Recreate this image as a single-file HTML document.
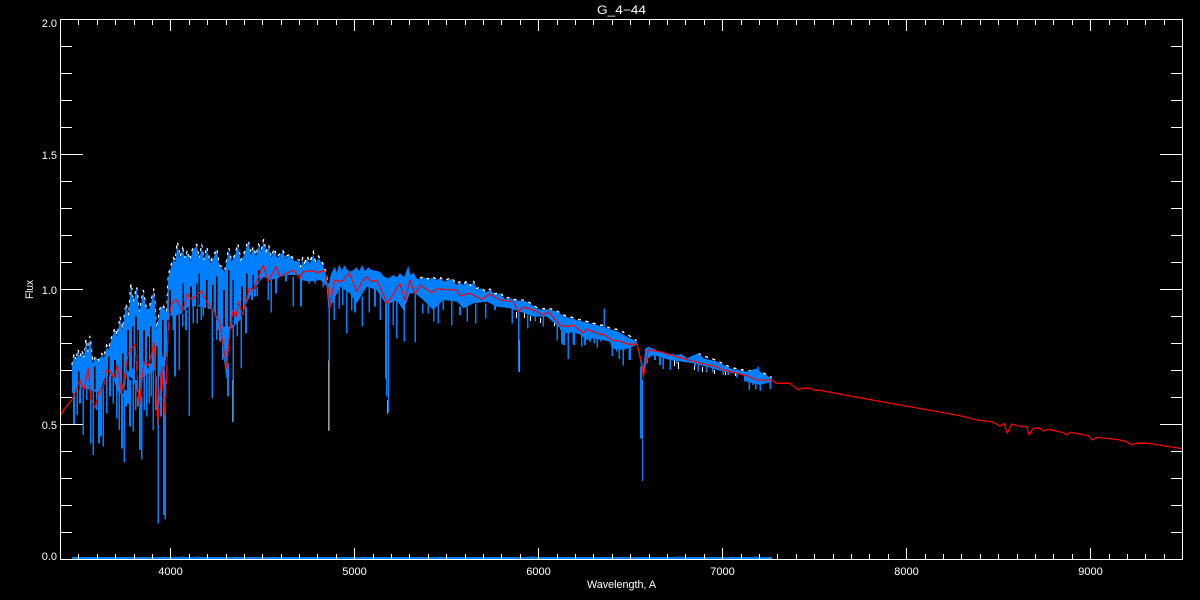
<!DOCTYPE html>
<html><head><meta charset="utf-8"><title>G_4-44</title>
<style>
html,body{margin:0;padding:0;background:#000;width:1200px;height:600px;overflow:hidden}
svg{display:block}
text{font-family:"Liberation Sans",sans-serif;fill:#fff;font-size:11px}
</style></head><body>
<svg width="1200" height="600" viewBox="0 0 1200 600" xmlns="http://www.w3.org/2000/svg">
<rect width="1200" height="600" fill="#000"/>

<!-- white tips of the upper envelope, under the blue -->
<g fill="none" stroke="#fff" stroke-width="4" stroke-dasharray="9 14" shape-rendering="crispEdges">
<path transform="translate(0,228.5) scale(.33333)" d="M216 410L222 375L228 395L234 362L240 385L246 365L252 390L258 332L264 370L270 322L278 400L288 383L296 395L305 375L312 385L320 350L326 360L335 326L345 298L352 320L360 265L368 300L378 225L386 260L393 165L400 220L410 175L418 250L430 185L438 235L448 238L462 180L470 300L480 240L488 228L500 250L505 140L512 115L520 88L526 95L532 40L540 85L548 60L556 90L562 65L570 95L578 60L590 48L598 90L605 46L612 95L620 55L630 100L640 85L650 60L658 110L665 115L675 125L686 58L694 95L702 85L714 46L722 95L732 75L745 36L752 75L760 55L768 80L776 48L784 65L791 32L798 70L806 50L814 85L822 60L832 85L848 65L858 85L870 75L880 92L900 95"/>
<path transform="translate(300,228) scale(.33333)" d="M0 120L8 90L14 104L22 85L30 102L40 72L46 100L56 85L65 100L75 122L85 170"/>
<path transform="translate(300,229) scale(.33333)" d="M360 148L372 142L384 150L396 143L408 150L420 145L432 155L444 150L456 147L468 165L480 158L492 165L500 156L512 170L520 155L530 178L545 175L556 188L570 180L585 195L600 190L615 208L630 205L645 212L660 212L680 215L695 225L710 235L725 240L745 238L770 245L785 255L800 262L815 265L830 270L850 275L870 280L900 288"/>
<path transform="translate(560,299) scale(.33333)" d="M120 78L136 80L150 88L175 92L200 105L230 125M415 163L430 172L450 176L470 185L490 195L510 205L535 210L560 215L590 215L610 222L635 235"/>
</g>
<g stroke="#fff" stroke-width="1" fill="none" shape-rendering="crispEdges">
<path d="M674.5 360v6M678.5 362v7M694.5 366v4M702.5 367v5M706.5 368v4M714.5 370v4M725.5 372v3M735.5 373v3M516.5 312v6M524.5 313v5M530.5 316v5M540.5 318v5M554.5 321v5M227.5 350v5M190.5 300v4M155.5 385v3"/>
</g>

<!-- thin grey spikes -->
<g stroke="#9a9a9a" stroke-width="1" fill="none" shape-rendering="crispEdges">
<path d="M328.5 360V431M232.5 380V422M212.5 340V398M387.5 400V414M519.5 340V372"/>
</g>

<!-- blue, region 1 -->
<g transform="translate(0,230) scale(.33333)" shape-rendering="crispEdges">
<path fill="#0080ff" d="M216 410L222 375L228 395L234 362L240 385L246 365L252 390L258 332L264 370L270 322L278 400L288 383L296 395L305 375L312 385L320 350L326 360L335 326L345 298L352 320L360 265L368 300L378 225L386 260L393 165L400 220L410 175L418 250L430 185L438 235L448 238L462 180L470 300L480 240L488 228L500 250L505 140L512 115L520 88L526 95L532 40L540 85L548 60L556 90L562 65L570 95L578 60L590 48L598 90L605 46L612 95L620 55L630 100L640 85L650 60L658 110L665 115L675 125L686 58L694 95L702 85L714 46L722 95L732 75L745 36L752 75L760 55L768 80L776 48L784 65L791 32L798 70L806 50L814 85L822 60L832 85L848 65L858 85L870 75L880 92L900 95L900 135L860 135L830 145L810 150L790 140L760 180L740 220L720 270L700 290L690 300L680 450L660 300L640 240L600 230L565 230L545 250L520 260L505 250L503 350L490 440L475 440L465 420L445 430L430 440L420 510L400 450L380 430L370 500L350 480L340 440L315 440L300 490L270 480L250 470L216 490Z"/>
<g stroke="#0080ff" stroke-width="5" fill="none">
<path d="M222 450V585M232 480V555M240 470V520M250 450V615M260 470V510M272 470V640M280 470V675M290 470V540M297 480V640M303 480V620M310 470V650M320 440V550M330 440V500M340 440V520M350 470V565M358 470V600M366 480V655M373 480V698M378 480V530M384 430V520M390 450V590M400 450V605M407 450V540M413 500V530M420 500V660M425 500V688M433 430V540M440 400V560M448 420V520M454 420V500M460 400V600M468 420V540M475 430V880M483 430V560M492 420V855M496 450V868M525 250V440M538 250V420M548 250V290M558 240V300M568 230V558M580 230V280M592 230V280M604 230V270M637 240V503M650 270V330M668 300V390M684 400V500M700 280V575M712 270V320M724 260V416M738 230V310M814 150V248M880 140V230M828 140V190M858 135V155M772 170V200M805 150V210M756 170V210M765 175V200M610 230V260M655 270V300M660 290V335M520 250V300M505 250V280"/>
</g>
<g stroke="#000" stroke-width="5" fill="none">
<path d="M573 170V238M590 160V235M620 150V240M638 165V242M672 180V290M726 170V260M700 150V285M760 135V180M776 120V155M236 425V480M284 410V478M345 390V440M384 300V425M408 260V450M432 300V395M470 350V440M503 270V345M488 270V380M415 300V500M452 290V400M368 370V490M326 380V440M398 290V415M444 320V415M510 180V250M550 160V245M598 130V225M650 140V260M686 120V290M740 130V210"/>
</g>
</g>

<!-- blue, region 2 -->
<g transform="translate(300,230) scale(.33333)" shape-rendering="crispEdges">
<path fill="#0080ff" d="M0 120L8 90L14 104L22 85L30 102L40 72L46 100L56 85L65 100L75 122L85 170L92 135L98 122L105 110L110 128L118 103L125 122L135 105L140 118L150 125L160 120L170 112L178 125L185 105L195 122L205 112L215 120L225 122L240 125L252 140L265 145L280 135L290 142L300 130L312 142L325 108L332 135L340 128L350 145L360 148L372 142L384 150L396 143L408 150L420 145L432 155L444 150L456 147L468 165L480 158L492 165L500 156L512 170L520 155L530 178L545 175L556 188L570 180L585 195L600 190L615 208L630 205L645 212L660 212L680 215L695 225L710 235L725 240L745 238L770 245L785 255L800 262L815 265L830 270L850 275L870 280L900 288L900 320L860 330L830 305L800 310L770 285L740 260L700 260L660 245L630 235L590 230L560 215L520 220L490 235L470 215L430 210L400 240L370 210L345 190L330 190L310 240L290 210L260 225L230 180L200 170L170 220L150 190L120 170L100 215L85 235L80 170L60 150L30 155L0 150Z"/>
<g stroke="#0080ff" stroke-width="5" fill="none">
<path d="M3 140V230M28 150V160M46 140V160M70 140V172M88 230V395M103 200V270M118 170V235M128 170V225M140 170V310M155 180V242M165 200V248M187 200V290M208 170V248M225 170V230M241 180V270M257 210V445M260 220V500M280 200V285M290 200V325M313 230V335M346 190V338M368 220V250M385 210V250M401 230V275M415 220V280M430 210V240M455 210V287M480 230V255M502 230V275M527 220V280M557 220V265M585 225V240M637 235V280M656 245V425M683 255V295M706 255V275M730 255V290M772 280V332M790 300V345M805 300V387M822 300V345M845 300V350M870 320V335M892 310V353"/>
</g>
<g stroke="#0080ff" stroke-width="3" fill="none"><path d="M88 395V600M265 220V548"/></g>
</g>

<!-- blue, region 3 -->
<g transform="translate(560,300) scale(.33333)" shape-rendering="crispEdges">
<path fill="#0080ff" d="M0 40L15 60L30 55L40 62L55 68L70 65L110 75L136 82L150 88L175 95L200 110L230 125L245 180L250 200L256 145L265 140L300 155L350 165L365 162L380 175L415 160L430 175L470 185L510 205L560 215L590 205L600 215L635 235L635 245L600 255L560 245L550 225L490 215L440 200L400 190L330 180L280 165L258 180L250 240L240 180L230 135L190 150L155 145L150 125L100 115L70 105L30 95L0 90Z"/>
<g stroke="#0080ff" stroke-width="5" fill="none">
<path d="M5 90V130M12 90V135M25 90V177M40 90V130M65 100V140M75 100V135M103 110V130M112 110V143M122 110V125M157 140V168M170 140V155M178 140V177M190 140V197M211 130V180M208 130V180M243 200V415M262 170V190M285 165V180M300 165V195M310 170V207M331 175V210M350 180V192M405 185V200M415 185V215M440 195V215M458 195V218M490 205V225M505 210V225M530 220V232M555 225V245M568 235V270M578 235V255M587 240V268M601 240V273M631 240V267M133 25V90M595 200V220M590 210V230"/>
</g>
<g stroke="#0080ff" stroke-width="3" fill="none"><path d="M247 240V543"/></g>
</g>

<!-- baseline blue -->
<path d="M72 558H772" stroke="#0080ff" stroke-width="2" fill="none" shape-rendering="crispEdges"/>
<path d="M174 557h2M180 557h4M188 557h2M194 557h6M206 557h2M273 557h2M528 557h8M675 557h8M754 557h4" stroke="#0060c0" stroke-width="1" fill="none" shape-rendering="crispEdges"/>

<!-- red model -->
<g fill="none" stroke="#f00" stroke-linejoin="round" stroke-width="1.2" shape-rendering="crispEdges">
<path d="M60.3 416L65 408.3L71.7 400L75 393.3L80 380L84 390L88.3 368.3L90.7 398.3L95 408.3L99 391.7L103.3 388.3L106.7 370L111 371.7L114 378.3L117.3 365L121.7 393.3L128.3 353.3L135 344L139.3 406.7L144 361.7L148.3 366L154.3 342.7L157.7 425L161.7 366.7L165 415L168.3 326.7L171 305L175.7 299.3L182.7 311L187.3 294L191.7 299.3L201.7 291L206.7 301.7L213.3 310L220 323.3L226.7 368.3L230 330L233.3 310L236 317.3L238.3 301.7L242.7 315L249.3 288.3L253.3 290L263.3 265L268.3 281.7L276 266.7L280 276.7L293.3 270L300 278.3L303.3 271.7L313.3 270.7L316.7 272.7L325 270.7L328.3 288.3L330 308.3L332.3 291.7L335 280L341.7 281.7L349.3 272.7L356.7 291.7L361.7 282.3L366.7 276.7L371.7 281.7L376.7 280L387.3 303.3L400 283.3L405 300.7L410 280L415 294L420 285L431.7 292.7L436.7 289L456.7 290L460 295.7L470 293.3L481.7 299.3L490 294L500 300L513.3 301.7L518.3 311.7L523.3 307.3L533.3 310L543.3 315L548.3 311.7L560 325L566.7 326.7L573.3 325L583.3 333.3L586.7 329L600 334.3L603.3 334.3L613.3 340.7L620 341L628.3 344.3L637.3 344.3L641.7 363.3L643.3 376.7L645.3 366.7L648.3 350L660 351.7L676.7 356.7L696.7 362.3L716.7 366.7L723.3 370L733.3 372.3L746.7 375.7L756.7 380L771.7 380L776.7 383.3L790 383.3L798.3 390L801.7 388.3L810 388.3L815 390.3L820 390.3L850 396L900 405L960 415.7L976.7 420L991.7 421.7L1000 426L1004 423.3L1007.3 433.3L1011.7 424L1018.3 426L1026.7 426.7L1029 435L1033.3 428.3L1040 428.3L1043.3 431L1048.3 429.3L1063.3 432.7L1066.7 435L1070.7 432.3L1088.3 435.7L1092.3 440L1096.7 437.3L1118.3 439.7L1126.7 441.7L1132.3 445L1135.7 443.3L1148.3 443.3L1163.3 445.7L1182.3 448.7"/>
</g>

<!-- axes -->
<g fill="none" stroke="#fff" stroke-width="1" shape-rendering="crispEdges">
<path d="M60.5 19.5H1182.5V559.5H60.5Z"/>
<path d="M78.5 559v-5M97.5 559v-5M115.5 559v-5M134.5 559v-5M152.5 559v-5M189.5 559v-5M207.5 559v-5M226.5 559v-5M244.5 559v-5M262.5 559v-5M281.5 559v-5M299.5 559v-5M317.5 559v-5M336.5 559v-5M373.5 559v-5M391.5 559v-5M409.5 559v-5M428.5 559v-5M446.5 559v-5M465.5 559v-5M483.5 559v-5M501.5 559v-5M520.5 559v-5M557.5 559v-5M575.5 559v-5M593.5 559v-5M612.5 559v-5M630.5 559v-5M649.5 559v-5M667.5 559v-5M685.5 559v-5M704.5 559v-5M741.5 559v-5M759.5 559v-5M777.5 559v-5M796.5 559v-5M814.5 559v-5M833.5 559v-5M851.5 559v-5M869.5 559v-5M888.5 559v-5M925.5 559v-5M943.5 559v-5M961.5 559v-5M980.5 559v-5M998.5 559v-5M1017.5 559v-5M1035.5 559v-5M1053.5 559v-5M1072.5 559v-5M1109.5 559v-5M1127.5 559v-5M1145.5 559v-5M1164.5 559v-5"/>
<path d="M170.5 559v-11M354.5 559v-11M538.5 559v-11M722.5 559v-11M906.5 559v-11M1090.5 559v-11"/>
<path d="M78.5 20v5M97.5 20v5M115.5 20v5M134.5 20v5M152.5 20v5M189.5 20v5M207.5 20v5M226.5 20v5M244.5 20v5M262.5 20v5M281.5 20v5M299.5 20v5M317.5 20v5M336.5 20v5M373.5 20v5M391.5 20v5M409.5 20v5M428.5 20v5M446.5 20v5M465.5 20v5M483.5 20v5M501.5 20v5M520.5 20v5M557.5 20v5M575.5 20v5M593.5 20v5M612.5 20v5M630.5 20v5M649.5 20v5M667.5 20v5M685.5 20v5M704.5 20v5M741.5 20v5M759.5 20v5M777.5 20v5M796.5 20v5M814.5 20v5M833.5 20v5M851.5 20v5M869.5 20v5M888.5 20v5M925.5 20v5M943.5 20v5M961.5 20v5M980.5 20v5M998.5 20v5M1017.5 20v5M1035.5 20v5M1053.5 20v5M1072.5 20v5M1109.5 20v5M1127.5 20v5M1145.5 20v5M1164.5 20v5"/>
<path d="M170.5 20v11M354.5 20v11M538.5 20v11M722.5 20v11M906.5 20v11M1090.5 20v11"/>
<path d="M61 46.5h11M61 73.5h11M61 100.5h11M61 127.5h11M61 181.5h11M61 208.5h11M61 235.5h11M61 262.5h11M61 316.5h11M61 343.5h11M61 370.5h11M61 397.5h11M61 451.5h11M61 478.5h11M61 505.5h11M61 532.5h11"/>
<path d="M61 154.5h22M61 289.5h22M61 424.5h22"/>
<path d="M1182 46.5h-11M1182 73.5h-11M1182 100.5h-11M1182 127.5h-11M1182 181.5h-11M1182 208.5h-11M1182 235.5h-11M1182 262.5h-11M1182 316.5h-11M1182 343.5h-11M1182 370.5h-11M1182 397.5h-11M1182 451.5h-11M1182 478.5h-11M1182 505.5h-11M1182 532.5h-11"/>
<path d="M1182 154.5h-22M1182 289.5h-22M1182 424.5h-22"/>
</g>

<!-- labels -->
<text x="597" y="14" style="font-size:12px" textLength="49" lengthAdjust="spacingAndGlyphs">G_4−44</text>
<g text-anchor="middle">
<text x="170.5" y="575">4000</text>
<text x="354.5" y="575">5000</text>
<text x="538.5" y="575">6000</text>
<text x="722.5" y="575">7000</text>
<text x="906.5" y="575">8000</text>
<text x="1090.5" y="575">9000</text>
</g>
<text x="587" y="588" textLength="69" lengthAdjust="spacingAndGlyphs">Wavelength, A</text>
<g text-anchor="end">
<text x="57" y="27">2.0</text>
<text x="57" y="159">1.5</text>
<text x="57" y="294">1.0</text>
<text x="57" y="429">0.5</text>
<text x="57" y="560">0.0</text>
</g>
<text transform="translate(33,299) rotate(-90)" textLength="19" lengthAdjust="spacingAndGlyphs">Flux</text>
</svg>
</body></html>
